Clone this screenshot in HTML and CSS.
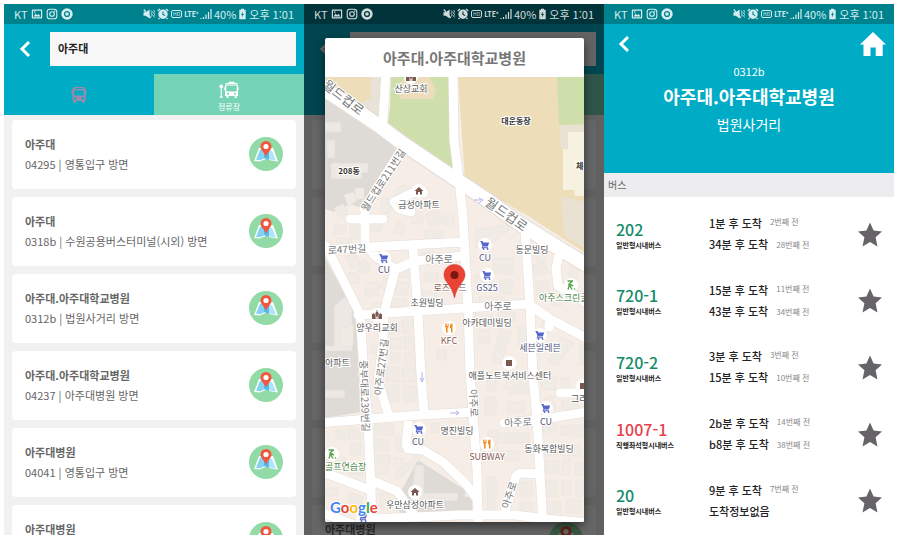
FILE: index.html
```html
<!DOCTYPE html>
<html lang="ko">
<head>
<meta charset="utf-8">
<meta name="viewport" content="width=device-width, initial-scale=1">
<title>버스 정류장</title>
<link rel="stylesheet" href="styles.css">
</head>
<body>
<svg class="sprite" aria-hidden="true">
  <symbol id="i-image" viewBox="0 0 12 12"><path fill="currentColor" fill-rule="evenodd" d="M1.500 1.500h9a.7.7 0 0 1 .7.7v7.600a.7.7 0 0 1-.7.7h-9a.7.7 0 0 1-.7-.7V2.200a.7.7 0 0 1 .7-.7zM2 2.700v6.600h8V2.700zM2.600 8.500l2-3 1.500 1.800 1.500-1.200 1.900 2.400zM3 3.400h1.400v1.400H3z"/></symbol>
  <symbol id="i-camera" viewBox="0 0 12 12"><g fill="none" stroke="currentColor" stroke-width="1.100"><rect x="1.200" y="1.200" width="9.600" height="9.600" rx="2.600"/><circle cx="6" cy="6" r="2.300"/></g><circle cx="8.700" cy="3.300" r=".7" fill="currentColor"/></symbol>
  <symbol id="i-chrome" viewBox="0 0 12 12"><circle cx="6" cy="6" r="4.400" fill="none" stroke="currentColor" stroke-width="2.600"/><circle cx="6" cy="6" r="1.800" fill="currentColor"/></symbol>
  <symbol id="i-mute" viewBox="0 0 12 12"><path fill="currentColor" d="M.5 4.200h2.300L6.600 1.500v9L2.800 7.800H.5z"/><path d="M.8 1.500 7.800 9.800" stroke="currentColor" stroke-width="1.200"/><path d="M8.300 2.500 9.300 4 8.300 5.500l1 1.500-1 1.500M10.600 2l1 1.500-1 1.500 1 1.500-1 1.500 1 1.500" fill="none" stroke="currentColor" stroke-width=".9"/></symbol>
  <symbol id="i-alarm" viewBox="0 0 12 12"><path fill="currentColor" fill-rule="evenodd" d="M6 1.600a4.700 4.700 0 1 1 0 9.400 4.700 4.700 0 0 1 0-9.400zM5.400 3.500v3.200l2.500 1.400.5-.9-1.900-1.100V3.500z"/><path d="M.8 3 3 1M11.200 3 9 1M2.500 9.800 1.500 11M9.500 9.800l1 1.200" stroke="currentColor" stroke-width="1.300"/></symbol>
  <symbol id="i-signal" viewBox="0 0 12 12"><path d="M1 11v-1M3.500 11V9M6 11V6.500M8.500 11V4M11 11V1" stroke="currentColor" stroke-width="1.200"/></symbol>
  <symbol id="i-battery" viewBox="0 0 9 12"><path fill="currentColor" fill-rule="evenodd" d="M3 .8h3v1h1.700v9.400H1.300V1.800H3zM5.200 3.500 3 6.900h1.300l-.5 2.600L6 6H4.800z"/></symbol>
  <symbol id="i-back" viewBox="0 0 12 18"><path d="M10 2 3 9l7 7" fill="none" stroke="currentColor" stroke-width="3"/></symbol>
  <symbol id="i-home" viewBox="0 0 26 24"><path fill="currentColor" d="M13 0 26 12.500h-3.300V24h-7v-8.500h-5.200V24h-7V12.500H0z"/></symbol>
  <symbol id="i-bus" viewBox="0 0 16 18"><path fill="currentColor" fill-rule="evenodd" d="M4 1h8c1.600 0 2.500 1 2.500 2.500v1h1v4h-1V15h-1v2h-2.400v-2H4.900v2H2.500v-2h-1V8.500h-1v-4h1v-1C1.500 2 2.400 1 4 1zM4.500 2v1h7V2zM3.300 4.500v5h9.400v-5zM4.300 11.300a1.200 1.200 0 1 0 0 2.400 1.200 1.200 0 0 0 0-2.400zm7.400 0a1.200 1.200 0 1 0 0 2.400 1.200 1.200 0 0 0 0-2.400z"/></symbol>
  <symbol id="i-stop" viewBox="0 0 20 18"><path fill="currentColor" fill-rule="evenodd" d="M2.200 3.500a2 2 0 0 1 .6 3.900v8.100h1v1.200H.7v-1.200h1V7.400a2 2 0 0 1 .5-3.900zM7.500 2h2V.8h6V2h2c1 0 1.500.6 1.500 1.600V6h.6v3H19v6h-1.300v2h-2v-2H9.500v2h-2v-2H6V9h-.7V6H6V3.600C6 2.600 6.500 2 7.500 2zM7.300 4.500v6h10.400v-6zM8 12v1.500h2V12zm7 0v1.500h2V12z"/><path d="M6 3.300h13" stroke="#76d4b6" stroke-width=".6"/></symbol>
  <symbol id="i-star" viewBox="0 0 24 24"><path fill="currentColor" d="m12 0 3.600 8.100 8.400.8-6.400 5.900L19.500 24 12 19.500 4.500 24l1.900-9.200L0 8.900l8.400-.8z"/></symbol>
  <symbol id="i-pin" viewBox="0 0 34 34"><circle cx="17" cy="17" r="17" fill="#92dba6"/><path fill="#fff" d="M10 11h14l5 13.500-6-.8-6-2-6 2.700-6-.3z"/><path fill="#85d3f3" d="M11 12.500h5V21l-4.500 2.200-4.500-.5z"/><path fill="#54b9e8" d="M15 14h5v9l-5-2z"/><path fill="#aee3f8" d="M20 14h3l4 9.300-3.500.2L20 22z"/><path fill="#f1573f" d="M17 4a5.500 5.500 0 0 1 5.500 5.500C22.500 13 19 15 17 19.500 15 15 11.500 13 11.500 9.500A5.500 5.500 0 0 1 17 4z"/><circle cx="17" cy="9.500" r="2.600" fill="#fff"/></symbol>
  <symbol id="m-cart" viewBox="-7 -7 14 14"><circle r="7" fill="#fff"/><path fill="#5565c8" d="M-4.500-4h2l.7 1.500h6l-1.400 4h-4.600l-.2.800h5v1h-6.500l1-2.300-1.600-4h-.4z"/><circle cx="-1.500" cy="4" r=".9" fill="#5565c8"/><circle cx="2.600" cy="4" r=".9" fill="#5565c8"/></symbol>
  <symbol id="m-food" viewBox="-7 -7 14 14"><circle r="7" fill="#fff"/><path fill="#f28c1e" d="M-4-4.500h.8V-2h.6v-2.500h.8V-2h.6v-2.500h.8v3.300l-1 1V4.500h-1.600V-.2l-1-1zM1-2.500C1-4 2-4.500 3.500-4.500v9H2V.5H1z"/></symbol>
  <symbol id="m-house" viewBox="-7 -7 14 14"><circle r="7" fill="#fff"/><path fill="#7a5850" d="M0-4 4.500 0H3v3.500H1V1h-2v2.500h-2V0h-1.500z"/></symbol>
  <symbol id="m-church" viewBox="-7 -7 14 14"><circle r="7" fill="#fff"/><path fill="#7a5850" d="M-5 4V-.5l1.500-1.500L-2-.5V4zM2 4V-.5L3.500-2 5-.5V4zM-1.600 4v-6L-.4-3.500v-1.500h.8v1.500L1.600-2v6H.7V1.500H-.7V4z"/></symbol>
  <symbol id="m-golf" viewBox="-7 -7 14 14"><circle r="7" fill="#fff"/><path d="M-3.500-4H2M1.500-4-2-1v2.500L-3 4.500M-1 1l2 3.500M-2-1l4 2" fill="none" stroke="#58a449" stroke-width="1.400"/><circle cx="3.500" cy="4" r=".8" fill="#58a449"/></symbol>
  <symbol id="m-square" viewBox="-7 -7 14 14"><circle r="7" fill="#fff"/><path fill="#7a5850" d="M-3-3h6v6h-6z"/></symbol>
</svg>

<main class="screens">
  <section class="phone" aria-label="정류장 검색">
    <header class="status">
      <span>KT</span><svg class="s12"><use href="#i-image"/></svg><svg class="s12"><use href="#i-camera"/></svg><svg class="s12"><use href="#i-chrome"/></svg>
      <span class="status-right"><svg class="s12"><use href="#i-mute"/></svg><svg class="s12"><use href="#i-alarm"/></svg><span class="hd">HD</span><span class="lte">LTE⁺</span><svg class="s12"><use href="#i-signal"/></svg><span>40%</span><svg class="bat"><use href="#i-battery"/></svg><span>오후 1:01</span></span>
    </header>
    <div class="search">
      <button class="icon-button" aria-label="뒤로"><svg class="back"><use href="#i-back"/></svg></button>
      <input class="field" type="text" aria-label="정류장 이름" value="아주대">
    </div>
    <nav class="tabs">
      <button class="tab tab-bus" aria-label="버스"><svg class="bus"><use href="#i-bus"/></svg></button>
      <button class="tab tab-stop"><svg class="stop"><use href="#i-stop"/></svg><span>정류장</span></button>
    </nav>
    <ul class="cards">
      <li class="card"><div><h2>아주대</h2><p>04295 | 영통입구 방면</p></div><button class="icon-button" aria-label="지도"><svg class="pin"><use href="#i-pin"/></svg></button></li>
      <li class="card"><div><h2>아주대</h2><p>0318b | 수원공용버스터미널(시외) 방면</p></div><button class="icon-button" aria-label="지도"><svg class="pin"><use href="#i-pin"/></svg></button></li>
      <li class="card"><div><h2>아주대.아주대학교병원</h2><p>0312b | 법원사거리 방면</p></div><button class="icon-button" aria-label="지도"><svg class="pin"><use href="#i-pin"/></svg></button></li>
      <li class="card"><div><h2>아주대.아주대학교병원</h2><p>04237 | 아주대병원 방면</p></div><button class="icon-button" aria-label="지도"><svg class="pin"><use href="#i-pin"/></svg></button></li>
      <li class="card"><div><h2>아주대병원</h2><p>04041 | 영통입구 방면</p></div><button class="icon-button" aria-label="지도"><svg class="pin"><use href="#i-pin"/></svg></button></li>
      <li class="card"><div><h2>아주대병원</h2><p>&nbsp;</p></div><button class="icon-button" aria-label="지도"><svg class="pin"><use href="#i-pin"/></svg></button></li>
    </ul>
  </section>

  <section class="phone" aria-label="정류장 지도">
    <header class="status status-dim">
      <span>KT</span><svg class="s12"><use href="#i-image"/></svg><svg class="s12"><use href="#i-camera"/></svg><svg class="s12"><use href="#i-chrome"/></svg>
      <span class="status-right"><svg class="s12"><use href="#i-mute"/></svg><svg class="s12"><use href="#i-alarm"/></svg><span class="hd">HD</span><span class="lte">LTE⁺</span><svg class="s12"><use href="#i-signal"/></svg><span>40%</span><svg class="bat"><use href="#i-battery"/></svg><span>오후 1:01</span></span>
    </header>
    <div class="search">
      <span class="icon-button"><svg class="back"><use href="#i-back"/></svg></span>
      <div class="field"></div>
    </div>
    <div class="tabs"><div class="tab tab-bus"></div><div class="tab tab-stop"></div></div>
    <ul class="cards">
      <li class="card"></li><li class="card"></li><li class="card"></li><li class="card"></li><li class="card"></li>
      <li class="card"><div><h2>아주대병원</h2><p>&nbsp;</p></div><svg class="pin"><use href="#i-pin"/></svg></li>
    </ul>
    <div class="scrim"></div>
    <div class="dialog" role="dialog" aria-labelledby="dialog-title">
      <h2 id="dialog-title">아주대.아주대학교병원</h2>
      <svg class="map" viewBox="325 77 259 445" preserveAspectRatio="xMidYMid slice" role="img" aria-label="정류장 주변 지도">
        <rect x="325" y="77" width="259" height="445" fill="#f6ede7"/>
        <path fill="#eeddb9" d="M325 77h58l-5 40-53-35zM458 77h126v175l-54-35-65-37z"/>
        <path fill="#e9e2d6" d="M371 77h12l-4 42-20-15 12-6z"/>
        <path fill="#cfdfab" d="M391 77h59l4 97-67-48 3-17zM557 77h27v47l-25 1z"/>
        <path fill="#eeddbd" d="M405 77h24l7 13-3 9h-33l-3-9z"/>
        <path fill="#dedbd7" d="M325 99l77 52-36 58-16-5-16 8-9-3zM325 258l32 58 3 96-35 6zM418 460l47 30v24h-64l-7-10zM450 497h22v18h-22z"/>
        <path fill="#e9e2d2" d="M559 125h25v7h-16v17h-7zM561 196l23 6v46l-20-13z"/>
        <path fill="#f7f2df" d="M568 132h16v64h-9l-1-6h-11v-41h5z"/>
        <path fill="#ede8e4" stroke="#dcd9d8" stroke-width=".5" d="M325 122h16v10h-16zM331 163h37v10h-6v6h-31zM327 140h8v18h-8zM325 346h9v-40l18-15v60h-27zM325 390h20v8h-20zM415 465h9v28h34v8h-47z"/>
        <path class="bldg" d="M334 208l9-4 5 9-7 5zM344 195l9-3 4 9-9 5zM355 188h9v11h-9zM382 198l8 1v15l-9-1zM393 192l12-8 5 6-13 10zM412 212h11v12h-11zM425 215l14-5 4 13-12 4zM444 214h10v12h-10zM425 230h18v9h-18zM372 220l11 3-2 9-10-2zM397 222l9 3-4 11-9-4zM334 225h12v9h-12zM350 223h9v16h-9zM336 238l15 1v6h-14z"/>
        <path class="bldg" d="M345 257l10-4 5 11-9 5zM363 260l8 5-3 9-11-3zM349 272l11 3-2 8h-11zM365 282h14v14h-14zM384 277l6 2-5 12-5-4zM400 267l10-1-1 12-12-2zM396 281l13 2-2 12h-12zM392 299h14v7h-14zM373 303h9v6h-9zM422 252h12v7h-12zM424 273h14v9h-14zM442 283h14v10h-14zM421 291h15v8h-15zM447 265h9v9h-9z"/>
        <path class="bldg" d="M390 322h9v12h-9zM402 320h11v13h-11zM390 338h11v11h-11zM404 336h10v14h-10zM391 353h9v10h-9zM404 353h11v12h-11zM371 345l8-3v12h-8zM386 367h13v15h-13zM402 368h14v14h-14zM388 385h11v17h-11zM404 386h12v16h-12zM437 350h9v10h-9zM341 330l12-6v22h-12z"/>
        <path class="bldg" d="M475 230l35-6-2 7-22 17h-10zM475 275h13v13h-13zM493 258h20v16h-20zM500 280h12v14h-12zM479 297h24v5h-24zM475 314h18v9h-18zM498 312h17v10h-17zM500 328l11 5-10 31-9-2zM479 330h11v13h-11zM518 326h9v19h-9zM530 225l8 3-2 10-8-1zM536 251h9v11h-9zM532 265l12-2 5 9-13 3zM536 281h13v15h-13zM553 297l10 3-3 7-10-3zM570 263l8 3-2 13-7-3zM572 289l9 3-4 8-8-4zM543 321l9 5-5 11-8-5zM560 337l14 6-18 23-7-5zM580 345h4v20h-4z"/>
        <path class="bldg" d="M487 372h9v19h-9zM507 380h8v-3h7v3h6v14h-18v-5h-5zM485 397h11v18h-11zM508 402h16v11h-16zM541 378h15v12h-15zM561 378h9v11h-9zM544 399l8-3 4 13-10 2zM562 400h16v9h-16zM543 424h14v8h-14zM561 426h9v9h-9zM572 425h12v12h-12zM545 445h12v11h-12zM563 445h18v11h-18zM546 461h13v13h-13zM562 459h8v16h-8zM575 462h9v13h-9zM546 480h11v17h-11zM562 481h9v14h-9zM576 480h8v17h-8zM547 502h14v11h-14zM566 500h15v13h-15z"/>
        <path class="bldg" d="M488 430h10v24h-10zM496 433h33v10h-33zM500 451h19v10h-19zM487 477h9v33h-9zM521 482h11v14h-11zM520 502h13v11h-13zM348 429h13v10h-13zM350 443h11v12h-11zM336 430h9v9h-9zM375 424h19v11h-19zM374 439h15v11h-15zM376 455h14v9h-14zM374 467h15v7h-15zM396 435h7v17h-7zM411 459l8-7 4 4-24 23-5-4zM394 458h10v11h-10zM349 466h13v9h-13zM336 457h9v9h-9zM350 492l13 5-3 9-12-4zM326 488h12v8h-12zM380 493h10v14h-10zM431 423h8v10h-8zM450 425l10 13-4 3-11-12z"/>
        <g class="road-edge">
          <path stroke-width="16" d="M315 83l63 42 24 18 55 37 33 22 27 20 43 27 30 18"/>
          <path stroke-width="10" d="M386 70l-3 52M453 70l1 70 4 32 5 45 5 90 2 65 7 98 1 55M365 207v38M350 219h33M325 250l43-3 97-5M368 247l8 10 20 12 19-8 48-5M395 270l-11 43-1 30-5 38 10 32M326 246l34 68 4 60 4 50 3 62 1 40M358 315l60-4 112-7M413 248l5 65 3 62 3 37M525 230l5 75 3 70 4 45 6 105M530 305l20 14 40 21M560 250l-4 18 2 18 30 18M320 423l100-8 55-3M409 416l-3 28 2 5 15 1 20 12 23 22 10 14M320 471l50 19M370 480l27 11 19 27M320 512l40 15M370 519l90-4h55l30 4 45 4M540 474l-20-1-4 3-12 38M504 423l33-3M537 420l50-8M560 393h27M394 202l18-9h12M394 202l5 7 12 3"/>
        </g>
        <g class="road">
          <path stroke-width="14" d="M315 83l63 42 24 18 55 37 33 22 27 20 43 27 30 18"/>
          <path stroke-width="9" d="M386 70l-3 52M453 70l1 70 4 32 5 45 5 90 2 65 7 98 1 55M365 207v38M350 219h33M325 250l43-3 97-5M368 247l8 10 20 12 19-8 48-5M395 270l-11 43-1 30-5 38 10 32M326 246l34 68 4 60 4 50 3 62 1 40M358 315l60-4 112-7M413 248l5 65 3 62 3 37M525 230l5 75 3 70 4 45 6 105M530 305l20 14 40 21M560 250l-4 18 2 18 30 18M320 423l100-8 55-3M409 416l-3 28 2 5 15 1 20 12 23 22 10 14M320 471l50 19M370 480l27 11 19 27M320 512l40 15M370 519l90-4h55l30 4 45 4M540 474l-20-1-4 3-12 38M504 423l33-3M537 420l50-8M560 393h27M394 202l18-9h12M394 202l5 7 12 3M550 319l-1 8M402 149l-38 60"/>
        </g>
        <g fill="none" stroke="#b5b0ee" stroke-width="1"><path d="M474 200h7M479 198l4 2-4 3M450 413h8M456 411l3 2-3 2M422 372v9M420 378l2 4 2-4"/></g>
        <g class="street big">
          <text transform="translate(343 98) rotate(38)" dy="4">월드컵로</text>
          <text transform="translate(506 215) rotate(35)" dy="4">월드컵로</text>
        </g>
        <g class="street">
          <text transform="translate(383 180) rotate(-57)" dy="4">월드컵로211번길</text>
          <text transform="translate(347 249) rotate(-3)" dy="4">로47번길</text>
          <text x="439" y="263">아주로</text>
          <text x="498" y="310">아주로</text>
          <text transform="translate(518 422) rotate(-3)" dy="4">아주로</text>
          <text transform="translate(474 403) rotate(88)" dy="4">아주로</text>
          <text transform="translate(509 495) rotate(-72)" dy="4">아주로</text>
          <text transform="translate(365 396) rotate(88)" dy="4">중부대로239번길</text>
          <text transform="translate(381 367) rotate(-83)" dy="4">아주로27번길</text>
        </g>
        <g class="poi">
          <text x="411" y="92">산상교회</text><text x="516" y="124" class="strong">대운동장</text><text x="349" y="174" class="strong">208동</text>
          <text x="576" y="169" class="strong start">체육관</text><text x="419" y="208">금성아파트</text><text x="532" y="253">동문빌딩</text>
          <text x="427" y="306">초원빌딩</text><text x="487" y="326">아카데미빌딩</text><text x="377" y="331">양우리교회</text>
          <text x="325" y="366" class="start">아파트</text><text x="510" y="379">애플노트북서비스센터</text><text x="571" y="402" class="start">그라찌에</text>
          <text x="457" y="434">명진빌딩</text><text x="549" y="452">동화복합빌딩</text><text x="415" y="508">우만삼성아파트</text>
          <text x="450" y="291" class="food">로즈우드</text><text x="449" y="344" class="food">KFC</text><text x="487" y="460" class="food">SUBWAY</text>
          <text x="384" y="273" class="shop">CU</text><text x="485" y="261" class="shop">CU</text><text x="487" y="291" class="shop">GS25</text><text x="540" y="351" class="shop">세븐일레븐</text><text x="418" y="445" class="shop">CU</text><text x="546" y="425" class="shop">CU</text>
          <text x="539" y="301" class="sport start">아주스크린골프</text><text x="325" y="470" class="sport start">골프연습장</text>
        </g>
        <g>
          <use href="#m-church" x="404" y="70" width="14" height="14"/><use href="#m-house" x="412" y="184" width="14" height="14"/>
          <use href="#m-cart" x="377" y="251" width="14" height="14"/><use href="#m-cart" x="478" y="238" width="14" height="14"/><use href="#m-cart" x="480" y="268" width="14" height="14"/>
          <use href="#m-golf" x="564" y="278" width="14" height="14"/><use href="#m-church" x="370" y="308" width="14" height="14"/><use href="#m-food" x="442" y="321" width="14" height="14"/>
          <use href="#m-cart" x="533" y="328" width="14" height="14"/><use href="#m-square" x="502" y="356" width="14" height="14"/><use href="#m-square" x="576" y="379" width="14" height="14"/>
          <use href="#m-cart" x="412" y="422" width="14" height="14"/><use href="#m-cart" x="539" y="401" width="14" height="14"/><use href="#m-food" x="480" y="437" width="14" height="14"/>
          <use href="#m-golf" x="325" y="447" width="14" height="14"/><use href="#m-house" x="408" y="485" width="14" height="14"/><use href="#m-cart" x="356" y="510" width="14" height="14"/>
        </g>
        <path fill="#ea4335" stroke="#c5372c" stroke-width=".5" d="M454.500 264.500c6 0 10.500 4.500 10.500 10.300 0 7.500-7.500 9.200-10.500 23.200-3-14-10.500-15.700-10.500-23.200 0-5.800 4.500-10.300 10.500-10.300z"/><circle cx="454.500" cy="275" r="4" fill="#7d1712"/>
        <text x="330" y="513" class="logo"><tspan fill="#4285f4">G</tspan><tspan fill="#ea4335">o</tspan><tspan fill="#fbbc05">o</tspan><tspan fill="#4285f4">g</tspan><tspan fill="#34a853">l</tspan><tspan fill="#ea4335">e</tspan></text>
      </svg>
    </div>
  </section>

  <section class="phone phone-detail" aria-label="도착 정보">
    <header class="status">
      <span>KT</span><svg class="s12"><use href="#i-image"/></svg><svg class="s12"><use href="#i-camera"/></svg><svg class="s12"><use href="#i-chrome"/></svg>
      <span class="status-right"><svg class="s12"><use href="#i-mute"/></svg><svg class="s12"><use href="#i-alarm"/></svg><span class="hd">HD</span><span class="lte">LTE⁺</span><svg class="s12"><use href="#i-signal"/></svg><span>40%</span><svg class="bat"><use href="#i-battery"/></svg><span>오후 1:01</span></span>
    </header>
    <div class="hero">
      <div class="hero-bar"><button class="icon-button" aria-label="뒤로"><svg class="back"><use href="#i-back"/></svg></button><button class="icon-button" aria-label="홈"><svg class="home"><use href="#i-home"/></svg></button></div>
      <p class="code">0312b</p>
      <h1>아주대.아주대학교병원</h1>
      <p class="toward">법원사거리</p>
    </div>
    <h2 class="section">버스</h2>
    <ul class="routes">
      <li class="route"><div class="line"><strong>202</strong><small>일반형시내버스</small></div><div class="eta"><p>1분 후 도착<span>2번째 전</span></p><p>34분 후 도착<span>28번째 전</span></p></div><button class="icon-button" aria-label="즐겨찾기"><svg class="star"><use href="#i-star"/></svg></button></li>
      <li class="route"><div class="line"><strong>720-1</strong><small>일반형시내버스</small></div><div class="eta"><p>15분 후 도착<span>11번째 전</span></p><p>43분 후 도착<span>34번째 전</span></p></div><button class="icon-button" aria-label="즐겨찾기"><svg class="star"><use href="#i-star"/></svg></button></li>
      <li class="route"><div class="line"><strong>720-2</strong><small>일반형시내버스</small></div><div class="eta"><p>3분 후 도착<span>3번째 전</span></p><p>15분 후 도착<span>10번째 전</span></p></div><button class="icon-button" aria-label="즐겨찾기"><svg class="star"><use href="#i-star"/></svg></button></li>
      <li class="route express"><div class="line"><strong>1007-1</strong><small>직행좌석형시내버스</small></div><div class="eta"><p>2b분 후 도착<span>14번째 전</span></p><p>b8분 후 도착<span>38번째 전</span></p></div><button class="icon-button" aria-label="즐겨찾기"><svg class="star"><use href="#i-star"/></svg></button></li>
      <li class="route"><div class="line"><strong>20</strong><small>일반형시내버스</small></div><div class="eta"><p>9분 후 도착<span>7번째 전</span></p><p>도착정보없음</p></div><button class="icon-button" aria-label="즐겨찾기"><svg class="star"><use href="#i-star"/></svg></button></li>
    </ul>
  </section>
</main>
</body>
</html>
```
FILE: styles.css
```css
* { box-sizing: border-box; margin: 0; padding: 0; }
body { background: #fff; font-family: "Noto Sans CJK KR", sans-serif; font-size: 11px; color: #666; }
ul { list-style: none; }
button, input { font: inherit; border: 0; background: none; color: inherit; border-radius: 0; }
svg { display: block; flex: none; }
.sprite { position: absolute; width: 0; height: 0; }

.screens { display: grid; grid-template-columns: 300fr 300fr 290fr; height: 100vh; padding: 4px 5px 5px 4px; }
.phone { position: relative; display: flex; flex-direction: column; min-width: 0; overflow: hidden; background: #f1f1f1; }
.phone-detail { background: #fff; }

.status { display: flex; align-items: center; gap: 3px; flex: none; height: 20px; padding: 0 10px; background: #00828e; color: #d5eef1; line-height: 18px; white-space: nowrap; }
.status-dim { background: #00343a; color: #d0dadb; position: relative; z-index: 2; }
.status-right { display: flex; align-items: center; gap: 2px; margin-left: auto; }
.s12 { width: 12px; height: 12px; }
.bat { width: 9px; height: 12px; }
.hd { border: 1px solid; border-radius: 2px; font-size: 5px; line-height: 6px; padding: 0 1px; }
.lte { font-size: 7px; line-height: 10px; font-weight: 700; }

.icon-button { display: flex; align-items: center; justify-content: center; flex: none; color: #fff; }
.search { display: flex; align-items: center; flex: none; height: 50px; padding: 0 8px 0 14px; gap: 18px; background: #00acc5; }
.back { width: 14px; height: 18px; }
.field { flex: 1; min-width: 0; height: 34px; padding: 0 8px 2px; background: #f8f8f8; color: #222; font-weight: 700; }
.tabs { display: flex; flex: none; height: 41px; }
.tab { flex: 1; display: flex; flex-direction: column; align-items: center; justify-content: center; }
.tab-bus { background: #00acc5; color: #9b8aab; }
.tab-stop { background: #76d4b6; color: #fff; font-size: 8px; line-height: 12px; gap: 2px; padding-top: 4px; }
.bus { width: 16px; height: 18px; }
.stop { width: 20px; height: 18px; }

.cards { display: grid; gap: 8px; padding: 5px 8px 0; }
.card { display: flex; align-items: center; justify-content: space-between; height: 69px; padding: 0 13px 2px; background: #fff; border-radius: 4px; }
.card h2 { font-size: 11px; line-height: 20px; font-weight: 700; color: #666; }
.card p { font-size: 11px; line-height: 20px; color: #666; }
.pin { width: 34px; height: 34px; }

.scrim { position: absolute; inset: 20px 0 0; background: rgba(0, 0, 0, .6); }
.dialog { position: absolute; inset: 34px 20px 13px 21px; z-index: 3; display: flex; flex-direction: column; background: #fff; border-radius: 2px; overflow: hidden; box-shadow: 0 4px 10px rgba(0, 0, 0, .5); }
.dialog h2 { flex: none; font-size: 15px; line-height: 39px; font-weight: 700; text-align: center; color: #777; }
.map { flex: 1; width: 100%; min-height: 0; }
.bldg { fill: #f1ebe5; stroke: #e8e0d9; stroke-width: .5; }
.road, .road-edge { fill: none; stroke: #fff; stroke-linejoin: round; stroke-linecap: round; }
.road-edge { stroke: #e4dcd6; }
.street text { font-size: 10px; fill: #777; text-anchor: middle; stroke: #fff; stroke-width: 2px; paint-order: stroke; }
.street.big text { font-size: 13px; }
.poi text { font-size: 9px; fill: #555; text-anchor: middle; stroke: #fff; stroke-width: 2px; paint-order: stroke; }
.poi .strong { font-size: 8px; font-weight: 700; fill: #333; }
.poi .start { text-anchor: start; }
.poi .food { fill: #85594f; }
.poi .shop { fill: #52557c; }
.poi .sport { fill: #4d8545; }
.logo { font-family: Lato, sans-serif; font-size: 15px; font-weight: 700; stroke: #fff; stroke-width: 2px; paint-order: stroke; }

.hero { flex: none; height: 149px; background: #00acc5; color: #fff; text-align: center; }
.hero-bar { display: flex; align-items: center; justify-content: space-between; height: 40px; padding: 0 8px 0 13px; }
.home { width: 26px; height: 24px; }
.code { font-size: 11px; line-height: 14px; }
.hero h1 { font-size: 18px; line-height: 36px; font-weight: 700; }
.toward { font-size: 14px; line-height: 20px; }
.section { flex: none; padding: 0 4px; background: #ededef; color: #666; font-size: 10px; line-height: 24px; font-weight: 400; }
.routes { flex: 1; min-height: 0; display: grid; grid-auto-rows: 1fr; padding-top: 5px; }
.route { display: grid; grid-template-columns: 93px 1fr auto; align-items: center; padding: 0 12px 2px; color: #222; }
.line strong { display: block; font-size: 16px; line-height: 22px; font-weight: 500; color: #138b6b; }
.express .line strong { color: #e8404b; }
.line small { display: block; font-size: 7px; line-height: 11px; font-weight: 700; }
.eta p { display: flex; gap: 8px; font-size: 11px; line-height: 21px; font-weight: 500; white-space: nowrap; }
.eta span { font-size: 8px; font-weight: 400; color: #888; }
.eta p:first-child span { line-height: 17px; }
.route .icon-button { color: #666468; }
.star { width: 24px; height: 25px; }
```
